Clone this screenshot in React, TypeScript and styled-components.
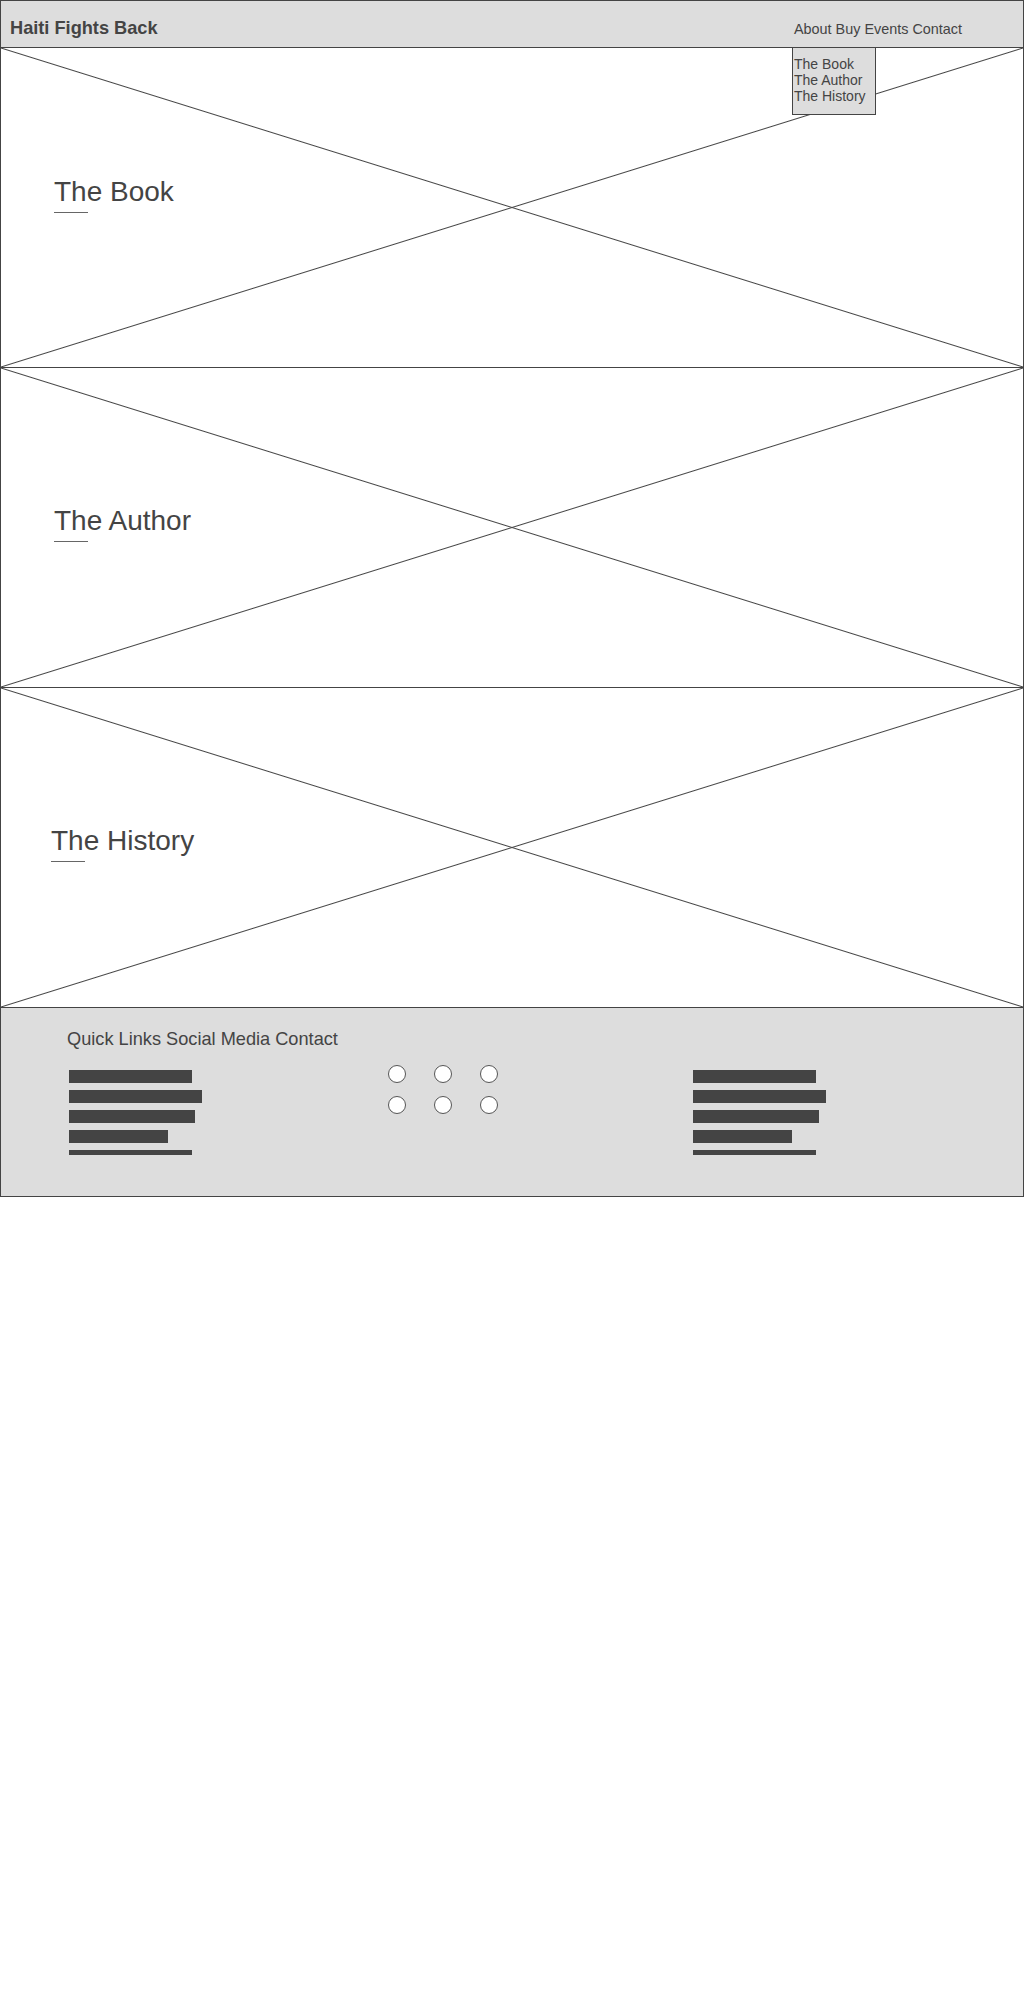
import React from "react";
import styled, { createGlobalStyle } from "styled-components";

const GlobalStyle = createGlobalStyle`
  html, body {
    margin: 0;
    padding: 0;
    background: #fff;
  }

  body {
    font-family: "Liberation Sans", Arial, sans-serif;
    color: #444;
  }
`;

const sections = [
  { title: "The Book", top: 128, left: 53 },
  { title: "The Author", top: 137, left: 53 },
  { title: "The History", top: 137, left: 50 },
];

const quickLinks = [123, 133, 126, 99];
const contactLines = [123, 133, 126, 99];

export default function App() {
  return (
    <>
      <GlobalStyle />
      <Frame>
        <Header>
          <Brand>Haiti Fights Back</Brand>
          <Nav>About Buy Events Contact</Nav>
        </Header>

        <Dropdown>
          <DropItem>The Book</DropItem>
          <DropItem>The Author</DropItem>
          <DropItem>The History</DropItem>
        </Dropdown>

        {sections.map(({ title, top, left }) => (
          <Section key={title} $top={top} $left={left}>
            <SectionTitle>{title}</SectionTitle>
            <Underline />
          </Section>
        ))}

        <Footer>
          <FooterTitle>Quick Links Social Media Contact</FooterTitle>
          <Columns>
            <Lines>
              {quickLinks.map((w, i) => (
                <Bar key={`ql-${i}`} $width={w} />
              ))}
              <Bar $width={123} $thin />
            </Lines>

            <Dots>
              {Array.from({ length: 6 }).map((_, i) => (
                <Dot key={`dot-${i}`} />
              ))}
            </Dots>

            <Lines>
              {contactLines.map((w, i) => (
                <Bar key={`ct-${i}`} $width={w} />
              ))}
              <Bar $width={123} $thin />
            </Lines>
          </Columns>
        </Footer>
      </Frame>
    </>
  );
}

const Frame = styled.div`
  position: relative;
  width: 1024px;
  box-sizing: border-box;
  border: 1px solid #444;
`;

const Header = styled.header`
  display: flex;
  align-items: baseline;
  box-sizing: border-box;
  height: 47px;
  padding: 17px 61px 0 9px;
  background: #ddd;
  border-bottom: 1px solid #444;
`;

const Brand = styled.div`
  font-size: 18.2px;
  font-weight: bold;
`;

const Nav = styled.nav`
  margin-left: auto;
  font-size: 14.4px;
`;

const Dropdown = styled.div`
  position: absolute;
  top: 46px;
  left: 791px;
  box-sizing: border-box;
  width: 84px;
  height: 68px;
  padding: 8px 0 0 1px;
  background: #ddd;
  border: 1px solid #444;
  font-size: 14px;
`;

const DropItem = styled.div`
  line-height: 16px;
`;

const Section = styled.section<{ $top: number; $left: number }>`
  box-sizing: border-box;
  height: 320px;
  padding: ${(p) => p.$top}px 0 0 ${(p) => p.$left}px;
  border-bottom: 1px solid #444;
  background-image:
    linear-gradient(
      to top right,
      transparent calc(50% - 1px),
      #444 50%,
      transparent calc(50% + 1px)
    ),
    linear-gradient(
      to bottom right,
      transparent calc(50% - 1px),
      #444 50%,
      transparent calc(50% + 1px)
    );
`;

const SectionTitle = styled.h2`
  margin: 0;
  font-size: 28px;
  font-weight: normal;
  line-height: normal;
`;

const Underline = styled.div`
  width: 34px;
  height: 1px;
  margin-top: 4px;
  background: #666;
`;

const Footer = styled.footer`
  box-sizing: border-box;
  height: 188px;
  padding: 21px 0 0 66px;
  background: #ddd;
`;

const FooterTitle = styled.div`
  font-size: 18.2px;
`;

const Columns = styled.div`
  display: grid;
  grid-template-columns: 319px 305px auto;
  margin-top: 20px;
  padding-left: 2px;
`;

const Lines = styled.div`
  display: flex;
  flex-direction: column;
  gap: 7px;
`;

const Bar = styled.div<{ $width: number; $thin?: boolean }>`
  width: ${(p) => p.$width}px;
  height: ${(p) => (p.$thin ? 5 : 13)}px;
  background: #444;
`;

const Dots = styled.div`
  display: grid;
  grid-template-columns: repeat(3, 18px);
  grid-auto-rows: 18px;
  gap: 13px 28px;
  align-content: start;
  margin-top: -5px;
`;

const Dot = styled.span`
  box-sizing: border-box;
  width: 18px;
  height: 18px;
  border: 1px solid #555;
  border-radius: 50%;
  background: #fff;
`;
